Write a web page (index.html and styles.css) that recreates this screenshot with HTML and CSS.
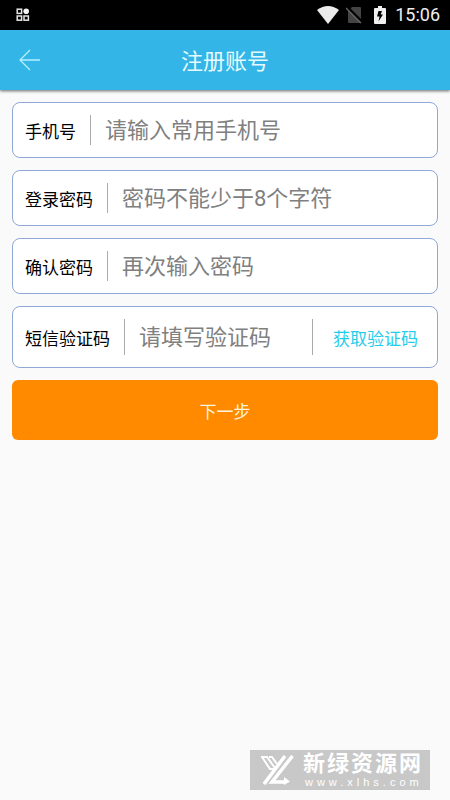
FILE: index.html
```html
<!DOCTYPE html>
<html lang="zh-CN">
<head>
<meta charset="utf-8">
<meta name="viewport" content="width=device-width, initial-scale=1">
<title>注册账号</title>
<link rel="stylesheet" href="styles.css">
</head>
<body>
<div class="statusbar">
  <svg class="status-apps" width="14" height="14" viewBox="0 0 14 14" aria-hidden="true">
    <g fill="none" stroke="#e4e4e4" stroke-width="1.5">
      <rect x="1.2" y="1.2" width="4.4" height="4.2"/>
      <rect x="1.2" y="8" width="4.4" height="4.2"/>
      <rect x="8" y="8" width="4.4" height="4.2"/>
    </g>
    <circle cx="10.2" cy="3.2" r="2.8" fill="#f4f4f4"/>
  </svg>
  <div class="status-right">
    <svg width="22" height="18" viewBox="0 0 22 18" aria-hidden="true">
      <path d="M0 4Q11 -4 22 4L11 18Z" fill="#ececec"/>
    </svg>
    <svg class="status-sim" width="17" height="18" viewBox="0 0 17 18" aria-hidden="true">
      <path d="M6 1H14Q15 1 15 2V17H3Q2 17 2 16V5Z" fill="#444"/>
      <path d="M1 1L16 16" stroke="#000" stroke-width="3"/>
      <path d="M0 2L15 17" stroke="#666" stroke-width="1.3"/>
    </svg>
    <svg class="status-battery" width="12" height="18" viewBox="0 0 12 18" aria-hidden="true">
      <path d="M4 0H8V2H11Q12 2 12 3V17Q12 18 11 18H1Q0 18 0 17V3Q0 2 1 2H4Z" fill="#f0f0f0"/>
      <path d="M4.5 5H8L6.7 8.5H9L4.5 15.5L5.5 10.5H3Z" fill="#000"/>
    </svg>
    <time class="clock">15:06</time>
  </div>
</div>
<header class="appbar">
  <button class="back" type="button" aria-label="返回">
    <svg width="22" height="22" viewBox="0 0 22 22" fill="none" stroke="#b5f0ff" stroke-width="1.3" aria-hidden="true">
      <path d="M11 1L1 11L11 21M1 11H21"/>
    </svg>
  </button>
  <h1 class="title">注册账号</h1>
</header>
<form class="form">
  <div class="field">
    <label class="label" for="phone">手机号</label>
    <input class="input" id="phone" type="tel" placeholder="请输入常用手机号">
  </div>
  <div class="field">
    <label class="label" for="password">登录密码</label>
    <input class="input" id="password" type="password" placeholder="密码不能少于8个字符">
  </div>
  <div class="field">
    <label class="label" for="confirm">确认密码</label>
    <input class="input" id="confirm" type="password" placeholder="再次输入密码">
  </div>
  <div class="field field-code">
    <label class="label" for="code">短信验证码</label>
    <input class="input" id="code" type="text" placeholder="请填写验证码">
    <button class="get-code" type="button">获取验证码</button>
  </div>
  <button class="submit" type="button">下一步</button>
</form>
<div class="watermark">
  <svg width="36" height="30" viewBox="0 0 36 30" aria-hidden="true">
    <g fill="none" stroke="#fff">
      <path d="M1 2H7L15 13M2 2L10 14H14M9 2H12L17 9" stroke-width="2"/>
      <path d="M25 1L4 29" stroke-width="3.5"/>
      <path d="M32.5 1L12 27H25" stroke-width="3.5"/>
    </g>
    <path d="M24 22L30 26.5L24 30Z" fill="#fff"/>
  </svg>
  <div class="watermark-text">
    <span class="watermark-name">新绿资源网</span>
    <span class="watermark-url">www.xlhs.com</span>
  </div>
</div>
</body>
</html>
```
FILE: styles.css
```css
* {
  box-sizing: border-box;
}

body {
  margin: 0;
  min-height: 100vh;
  background: #fafafa;
  font-family: Roboto, "Noto Sans CJK SC", sans-serif;
  color: #000;
}

button,
input {
  margin: 0;
  padding: 0;
  border: 0;
  background: none;
  font-family: inherit;
}

svg {
  display: block;
}

.statusbar {
  display: flex;
  align-items: center;
  justify-content: space-between;
  height: 30px;
  padding: 0 10px 0 16px;
  background: #000;
}

.status-right {
  display: flex;
  align-items: center;
}

.status-sim {
  margin-left: 7px;
}

.status-battery {
  margin-left: 11px;
}

.clock {
  margin-left: 9px;
  font-size: 18px;
  line-height: 30px;
  color: #eee;
}

.appbar {
  display: grid;
  grid-template-columns: 60px 1fr 60px;
  align-items: center;
  height: 60px;
  background: #33b5e7;
  box-shadow: 0 1px 3px rgba(0, 0, 0, 0.6);
}

.back {
  display: flex;
  align-items: center;
  justify-content: center;
  height: 60px;
}

.title {
  margin: 0;
  padding-top: 3px;
  text-align: center;
  font-size: 22px;
  font-weight: 400;
  line-height: 32px;
  color: #e6fbff;
}

.form {
  display: flex;
  flex-direction: column;
  gap: 12px;
  padding: 12px;
}

.field {
  display: flex;
  align-items: stretch;
  height: 56px;
  padding: 12px;
  border: 1px solid #8fa8d6;
  border-radius: 8px;
  background: #fff;
}

.field-code {
  height: 62px;
}

.label {
  display: flex;
  align-items: center;
  padding-right: 14px;
  border-right: 1px solid #aaa;
  font-size: 17px;
  white-space: nowrap;
}

.input {
  flex: 1;
  min-width: 0;
  padding-left: 14px;
  outline: 0;
  font-size: 22px;
  color: #222;
}

.input::placeholder {
  color: #808080;
  opacity: 1;
}

.get-code {
  padding: 0 7px 0 20px;
  border-left: 1px solid #aaa;
  font-size: 17px;
  color: #1fcdeb;
}

.submit {
  height: 60px;
  border-radius: 6px;
  background: #ff8a00;
  font-size: 17px;
  color: #fff3df;
}

.watermark {
  position: fixed;
  right: 20px;
  bottom: 10px;
  display: flex;
  align-items: center;
  gap: 7px;
  height: 40px;
  padding: 0 7px 0 10px;
  background: #c8c8c8;
  color: #fff;
}

.watermark-text {
  display: flex;
  flex-direction: column;
  white-space: nowrap;
}

.watermark-name {
  font-size: 22px;
  font-weight: 700;
  line-height: 24px;
  letter-spacing: 2px;
}

.watermark-url {
  padding-left: 2px;
  font-family: "Liberation Sans", sans-serif;
  font-size: 11px;
  line-height: 12px;
  letter-spacing: 4px;
}
```
